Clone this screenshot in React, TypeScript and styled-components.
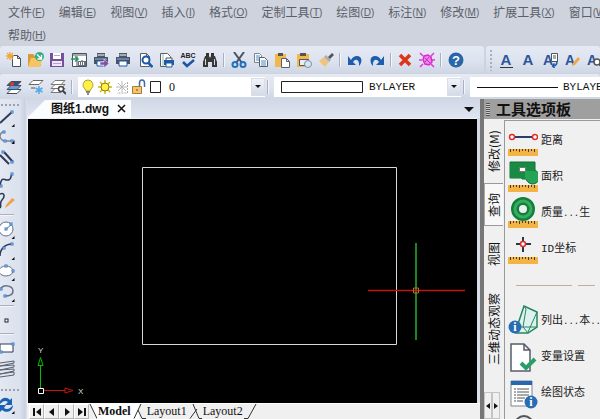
import React from "react";
import styled, { createGlobalStyle, css } from "styled-components";

const cjk = '"Noto Sans CJK SC", sans-serif';
const blue = "#1f5aa6";
const navy = "#2b3b57";
const gold = "#f2b84b";

const GlobalStyle = createGlobalStyle`
  * { box-sizing: border-box; }
  body { margin: 0; overflow: hidden; font-family: "Liberation Sans", ${cjk}; background: #cfd3dd; }
  button, select { font: inherit; color: inherit; }
  button { border: 0; padding: 0; margin: 0; background: none; }
  svg { display: block; flex: none; }
`;

const Window = styled.div`
  height: 100vh;
  display: flex;
  flex-direction: column;
  overflow: hidden;
  background: #cfd3dd;
`;

/* ---------- menu ---------- */
const MenuBar = styled.nav`
  display: flex;
  flex-wrap: wrap;
  column-gap: 14px;
  margin-right: -24px;
  padding: 0 0 0 8px;
  flex: none;
`;
const MenuItem = styled.button`
  height: 23px;
  display: flex;
  align-items: center;
  font: 12px/23px ${cjk};
  color: #5a5f6a;
  white-space: nowrap;
`;
const Hint = styled.span`
  font: 10px/23px "Liberation Sans", sans-serif;
  padding-top: 2px;
  u { text-underline-offset: 1px; }
`;

/* ---------- toolbars ---------- */
const ToolRow = styled.div`
  display: flex;
  gap: 2px;
  height: 27px;
  flex: none;
  min-width: 0;
`;
const barFace = css`
  background: linear-gradient(#e6eaf4, #dde3ef 55%, #cfd6e4);
  border-radius: 3px;
`;
const MainBar = styled.div`
  ${barFace}
  flex: 0 0 484px;
  display: flex;
  align-items: center;
  padding: 0 17px 0 3px;
`;
const TextBar = styled.div`
  ${barFace}
  flex: 1 1 0;
  min-width: 0;
  display: flex;
  align-items: center;
  overflow: hidden;
  padding-left: 3px;
`;
const LayerBar = styled.div`
  ${barFace}
  margin-top: 1px;
  height: 25px;
  flex: none;
  display: flex;
  align-items: center;
  overflow: hidden;
  padding-left: 3px;
`;
const ToolButton = styled.button<{ $fixed?: boolean }>`
  flex: ${(p) => (p.$fixed ? "0 0 22px" : "1 1 0")};
  min-width: 0;
  height: 22px;
  display: flex;
  align-items: center;
  justify-content: center;
`;
const Separator = styled.span<{ $wide?: boolean }>`
  flex: none;
  width: ${(p) => (p.$wide ? 9 : 7)}px;
  height: 14px;
  background: linear-gradient(90deg, transparent 2px, #aab0bd 2px 3px, #f4f6fa 3px 4px, transparent 4px);
`;
const Grip = styled.span`
  flex: none;
  width: 6px;
  height: 22px;
  background: radial-gradient(circle at 2px 2px, #a9afbb 1px, transparent 1px) 0 0 / 4px 4px repeat-y;
`;
const Combo = styled.label<{ $indent?: number }>`
  position: relative;
  flex: none;
  width: 187px;
  height: 20px;
  display: flex;
  align-items: center;
  gap: 1px;
  padding-left: ${(p) => p.$indent ?? 2}px;
  background: #fff;
`;
const ComboSelect = styled.select<{ $mono?: boolean }>`
  appearance: none;
  flex: 1;
  min-width: 0;
  height: 20px;
  border: 0;
  padding: 0 0 0 4px;
  background: transparent;
  color: #111;
  font: ${(p) => (p.$mono ? '11px "Liberation Mono", monospace' : '12px "Liberation Serif", serif')};
`;
const ComboArrow = styled.span`
  position: absolute;
  right: 0;
  top: 1px;
  width: 14px;
  height: 18px;
  display: flex;
  align-items: center;
  justify-content: center;
  background: linear-gradient(#f1f4f9, #d3dae7);
  border: 1px solid #d9dee8;
  pointer-events: none;
`;

/* ---------- work area ---------- */
const Body = styled.div`
  flex: 1;
  min-height: 0;
  display: flex;
  background: linear-gradient(#d3d8e4, #dce2ee);
`;
const DrawTools = styled.aside`
  flex: 0 0 27px;
  overflow: hidden;
  background: linear-gradient(90deg, #e3e8f2, #dbe1ed 20px, #c9d0df 25px, #dfe4ee);
`;
const DrawGrip = styled.div<{ $tall?: boolean }>`
  height: ${(p) => (p.$tall ? 14 : 8)}px;
  width: 21px;
  background: radial-gradient(circle at 2px 2px, #9aa1af 1px, transparent 1px) 0 100% / 4px 4px repeat-x;
  background-position-y: ${(p) => (p.$tall ? 8 : 4)}px;
`;
const DrawButton = styled.button`
  display: block;
  width: 16px;
  height: 21px;
`;
const DrawRule = styled.div`
  width: 14px;
  height: 7px;
  background: linear-gradient(transparent 2px, #aab0be 2px 3px, #f3f5f9 3px 4px, transparent 4px);
`;
const DocArea = styled.main`
  flex: 1;
  min-width: 0;
  display: flex;
  flex-direction: column;
`;
const DocTabs = styled.div`
  height: 19px;
  flex: none;
  display: flex;
  align-items: flex-end;
  background: linear-gradient(#d1d7e4, #dfe5f1);
`;
const DocTab = styled.div`
  height: 18px;
  display: flex;
  align-items: center;
  gap: 8px;
  padding: 0 4px 0 24px;
  background: #fbfcfe;
  clip-path: polygon(0 100%, 18px 0, 100% 0, 100% 100%);
  font: bold 12px/18px "Liberation Sans", ${cjk};
  color: #111;
`;
const CloseButton = styled.button`
  width: 10px;
  height: 16px;
  display: flex;
  align-items: center;
`;
const TabMenu = styled.button`
  margin: 0 5px 0 auto;
  width: 12px;
  height: 18px;
  display: flex;
  align-items: center;
  justify-content: center;
`;
const Canvas = styled.div`
  flex: 1;
  min-height: 0;
  margin-right: 3px;
  background: #000;
  border-left: 1px solid #eef0f4;
  border-top: 1px solid #eef0f4;
`;
const SheetBar = styled.div`
  flex: none;
  height: 16px;
  display: flex;
  padding-left: 2px;
  background: #f0f0f0;
  border-top: 1px solid #fff;
  overflow: hidden;
`;
const SheetNav = styled.button`
  width: 15px;
  height: 15px;
  display: flex;
  align-items: center;
  justify-content: center;
  border: 1px solid #b5b5b5;
  border-top-color: #fff;
  border-left-color: #fff;
`;
const SheetTab = styled.button<{ $active?: boolean }>`
  height: 15px;
  padding: 0 1px;
  font: ${(p) => (p.$active ? "bold" : "normal")} 12px/15px "Liberation Serif", serif;
  color: #111;
  background: ${(p) => (p.$active ? "#fff" : "#f0f0f0")};
`;

/* ---------- palette ---------- */
const Palette = styled.aside`
  flex: 0 0 120px;
  display: flex;
  flex-direction: column;
  overflow: hidden;
  border-left: 4px solid #777;
  background: #f0f0f0;
`;
const PaletteHead = styled.header`
  flex: none;
  height: 20px;
  display: flex;
  align-items: center;
  gap: 6px;
  padding-left: 2px;
  background: #9f9f9f;
  color: #111;
  font: bold 15px/20px ${cjk};
  white-space: nowrap;
`;
const HeadGrip = styled.span`
  width: 4px;
  height: 13px;
  background: repeating-linear-gradient(#555 0 1px, #c8c8c8 1px 2px);
`;
const PaletteBody = styled.div`
  flex: 1;
  min-height: 0;
  display: flex;
  padding-top: 1px;
`;
const SideTabs = styled.div`
  flex: 0 0 20px;
  display: flex;
  flex-direction: column;
`;
const SideTab = styled.button<{ $size: number; $active?: boolean }>`
  flex: 0 0 ${(p) => p.$size}px;
  width: 19px;
  writing-mode: vertical-rl;
  text-orientation: sideways;
  transform: rotate(180deg);
  text-align: center;
  white-space: nowrap;
  font: 12px/18px ${cjk};
  color: #111;
  ${(p) =>
    p.$active &&
    css`
      background: #f8f8f8;
      border-top: 1px solid #999;
      border-bottom: 1px solid #999;
      border-right: 1px solid #aaa;
    `}
`;
const SideScroll = styled.div`
  margin-top: 16px;
  display: flex;
  height: 34px;
`;
const SideScrollButton = styled.button`
  flex: 0 0 8px;
  border: 1px solid #c4c4c4;
  display: flex;
  align-items: center;
  justify-content: center;
`;
const ToolList = styled.div`
  flex: 1;
  min-width: 0;
  overflow: hidden;
  border-left: 1px solid #999;
  border-top: 1px solid #999;
  padding: 2px 0 0 3px;
`;
const PaletteItem = styled.button`
  height: 36px;
  display: flex;
  align-items: center;
  gap: 3px;
  color: #222;
  font: 11px/16px "Liberation Mono", ${cjk};
  white-space: nowrap;
`;
const Dots = styled.span`
  font-size: 9px;
`;
const ListRule = styled.div`
  height: 36px;
  background: linear-gradient(#c5ae93, #c5ae93) 8px 18px / 56px 1px no-repeat,
    linear-gradient(#c5ae93, #c5ae93) 70px 18px / 17px 1px no-repeat;
`;

/* ---------- icons ---------- */
const Icon = ({ children, w = 16, h = 16 }: { children: React.ReactNode; w?: number; h?: number }) => (
  <svg width={w} height={h} viewBox={`0 0 ${w} ${h}`} fill="none" aria-hidden="true">
    {children}
  </svg>
);

const Down = ({ w = 6 }: { w?: number }) => (
  <svg width={w} height={w / 2} viewBox="0 0 8 4" preserveAspectRatio="none" aria-hidden="true">
    <path d="M0 0h8L4 4z" fill="#111" />
  </svg>
);

const printer = (
  <>
    <path d="M4 1h8v4H4z" fill="#4c5668" />
    <path d="M4.500 3h7" stroke="#fff" />
    <path d="M1 5h14v7H1z" fill="#46536a" />
    <path d="M2 7h12" stroke="#9fb0cc" />
    <path d="M4 9h8v5H4z" fill="#fff" stroke="#1f5aa6" />
  </>
);
const page = <path d="M3.500 1.500h6l3 3v10h-9zM9.500 1.500v3h3" fill="#fff" stroke="#59606c" />;

const fileIcons: [string, React.ReactNode][] = [
  ["新建", <>
    <path d="M6.500 3.500h5l3 3v8h-8z M11.500 3.500v3h3" fill="#fff" stroke="#4b525e" />
    <path d="M4 0v8M0 4h8M1 1l6 6M7 1L1 7" stroke="#f0aa38" strokeWidth="1.300" />
  </>],
  ["打开", <>
    <path d="M0 2h5l2 2h6v10H0z" fill="#d99a35" />
    <path d="M3 6h12l-3 9H0z" fill="#f6c463" />
    <circle cx="11.500" cy="4.500" r="4.500" fill="#35ad86" />
    <path d="M9 2.500l4 4M13.500 3v4h-4" stroke="#fff" strokeWidth="1.300" />
  </>],
  ["保存", <>
    <path d="M1 1h14v14H1z" fill="#76509b" />
    <path d="M4 1h8v6H4z" fill="#fff" /><path d="M3 9h10v5H3z" fill="#efe8f6" />
    <path d="M5 3.500h6M4 11.500h8" stroke="#b6a3ca" />
  </>],
  ["输入", <>
    <path d="M1.500 1.500h14v13h-14z" fill="#fff" stroke="#4b525e" />
    <path d="M1 3h14M6 4v10M11 8v6" stroke="#4b525e" /><path d="M7 9h8v5H7z" fill="#66717e" />
    <path d="M8.500 10v3M10.500 10v3M12.500 10v3" stroke="#fff" />
    <path d="M0 7h6M4 4.500L7 7l-3 2.500" stroke="#25965e" strokeWidth="1.500" />
  </>],
  ["输出", <>{printer}<path d="M7 10h4V7l5 4.500-5 4.500v-3H7z" fill="#8252a6" stroke="#fff" strokeWidth=".5" /></>],
  ["打印", printer],
  ["打印预览", <>{page}<circle cx="9" cy="8" r="3.500" fill="#fff" stroke={blue} strokeWidth="2" /><path d="M11.500 11l4 4" stroke={blue} strokeWidth="2.500" /></>],
  ["页面设置", <>
    <path d="M2.500 1.500h7l3 3v10h-10z" fill="#fff" stroke="#59606c" /><path d="M5 2v12" stroke="#7dc5ab" />
    <path d="M8 6h6v3H8z" fill="#fff" stroke="#555" /><path d="M6 8h10v5H6z" fill={blue} /><path d="M8 11h6v4H8z" fill="#fff" stroke={blue} />
  </>],
  ["拼写检查", <>
    <text x="8" y="6" textAnchor="middle" fontSize="7" fontWeight="bold" fontFamily="Liberation Sans" fill="#222">ABC</text>
    <path d="M3 10l4 4 7-6" stroke="#1f55a5" strokeWidth="2.500" />
  </>],
  ["查找", <>
    <path d="M4 1h3v3H4zM9 1h3v3H9z" fill="#333" /><path d="M3 4h4l1 2 1-2h4l2 6v5h-5v-5H6v5H1v-5z" fill="#383838" />
    <path d="M3.500 7v6M12.500 7v6" stroke="#d6d9e0" />
  </>],
];
const editIcons: [string, React.ReactNode][] = [
  ["剪切", <>
    <path d="M3 0l8 11M13 0L5 11" stroke="#4b5260" strokeWidth="2" />
    <circle cx="4" cy="12.500" r="2.500" stroke="#2471bd" strokeWidth="2" /><circle cx="12" cy="12.500" r="2.500" stroke="#2471bd" strokeWidth="2" />
  </>],
  ["复制", <>
    <path d="M1.500 1.500h5l2 2v7h-7z" fill="#fff" stroke="#7b8491" /><path d="M3 4h4M3 6h4M3 8h3" stroke="#4f87bf" />
    <path d="M6.500 5.500h5l3 3v6h-8z" fill="#fff" stroke="#59606c" /><path d="M8 9h5M8 11h5M8 13h5" stroke="#4f87bf" />
  </>],
  ["粘贴", <>
    <path d="M1 2h11v13H1z" fill={gold} /><path d="M4 1h5v3H4z" fill="#555" />
    <path d="M7.500 6.500h5l3 3v6h-8zM12.500 6.500v3h3" fill="#fff" stroke="#59606c" />
  </>],
  ["选择性粘贴", <>
    <path d="M1 2h12v13H1z" fill={gold} /><path d="M4 1h6v3H4z" fill="#555" />
    <path d="M3.500 7.500h9v6h-9z" fill="#e7eef7" stroke="#555" /><circle cx="12" cy="12" r="3.500" fill="#d5e5f5" stroke="#7690ad" />
  </>],
  ["特性匹配", <>
    <path d="M1 9l5-4 5 5-4 5z" fill="#f0c47c" /><path d="M6 5l2-2 5 5-2 2z" fill="#a5b0bd" /><path d="M10 5l4-4 2 2-4 4z" fill="#555" />
  </>],
];
const undoPath = "M1 4v9h8l-3-3c2-3 5-3 6 1v3c4-4 3-10-2-10-3 0-4 1-6 4z";
const historyIcons: [string, React.ReactNode][] = [
  ["撤销", <path d={undoPath} fill="#1d5dab" />],
  ["重做", <path d={undoPath} fill="#1d5dab" transform="matrix(-1 0 0 1 16 0)" />],
];
const removeIcons: [string, React.ReactNode][] = [
  ["删除", <path d="M3 3l10 10M13 3L3 13" stroke="#dc3518" strokeWidth="3.500" />],
  ["清理", <>
    <path d="M1 1l3 3M15 1l-3 3M1 15l3-3M15 15l-3-3M0 8h3M13 8h3" stroke="#e337dc" strokeWidth="1.500" />
    <path d="M5 4l4-1 3 2 1 5-3 3-4-1-2-4z" fill="#ef83e9" stroke="#d92bd0" strokeWidth="1.500" /><path d="M6 6l5 5M10 5l-4 5" stroke="#b535bb" />
  </>],
];
const helpIcon = (
  <>
    <circle cx="8" cy="8" r="7.500" fill="#2866a8" />
    <text x="8" y="13" textAnchor="middle" fontSize="13" fontWeight="bold" fontFamily="Liberation Sans" fill="#fff">?</text>
  </>
);
const letterA = (x = 8) => (
  <text x={x} y="13" textAnchor="middle" fontSize="15" fontWeight="bold" fontFamily="Liberation Sans" fill="#2c569b">A</text>
);
const letterASmall = (
  <text x="6" y="13" textAnchor="middle" fontSize="14" fontWeight="bold" fontFamily="Liberation Sans" fill="#2c569b">A</text>
);
const textIcons: [string, React.ReactNode][] = [
  ["多行文字", <>{letterA()}<path d="M2 15.500h13" stroke="#333" /></>],
  ["单行文字", letterA()],
  ["字段", <>{letterASmall}<path d="M9.500 1.500h6v8h-6z" fill="#fff" stroke="#555" /><path d="M11 4h3M11 6h3" stroke="#555" /><path d="M15 9c0 4-2 5-4 5M12.500 11.500l-2 2.500 2 2" stroke={blue} strokeWidth="1.500" /></>],
  ["编辑文字", <>{letterASmall}<path d="M8 14l1-3 5-6 2 2-5 6z" fill="#efa846" /></>],
  ["查找文字", <>{letterASmall}<circle cx="11" cy="10" r="3" fill="#fff" stroke="#555" strokeWidth="1.500" /><path d="M13 12l3 3" stroke="#555" strokeWidth="2" /></>],
];
const sheet = (y: number, fill: string, stroke = "#454c58") => <path d={`M5 ${y}h10l-4 4H1z`} fill={fill} stroke={stroke} />;
const layerIcons: [string, React.ReactNode][] = [
  ["图层", <>{sheet(10.5, "#fff")}{sheet(6.5, "#5fa0dc")}{sheet(2.5, "#32527f")}<circle cx="6" cy="5" r="2" fill="#d93d2a" /></>],
  ["冻结图层", <>{sheet(1.5, "#fff", "#666")}<path d="M3 9h4" stroke="#555" /><path d="M11 7v8M7.500 9l7 4M14.500 9l-7 4" stroke="#54a8e8" strokeWidth="1.500" /></>],
  ["图层浏览", <>{sheet(9.5, "#fff", "#777")}{sheet(5.5, "#fff", "#777")}{sheet(1.5, "#fff", "#777")}<circle cx="11" cy="10" r="2.500" fill="#fff" stroke="#444" strokeWidth="1.500" /><path d="M13 12l3 3" stroke="#444" strokeWidth="2" /></>],
];

const node = (x: number, y: number) => <rect x={x - 1} y={y - 1} width="2" height="2" fill="#fff" stroke="#3978c4" />;
const corner = <path d="M14.500 17v3h-3z" fill="#111" />;
const ink = { stroke: navy, strokeWidth: 1.5 };
const drawGroups: [string, React.ReactNode][][] = [
  [
    ["直线", <><path d="M0 16L12 5" {...ink} strokeWidth="2" />{node(12, 5)}{corner}</>],
    ["多段线", <><path d="M0 9c0-4 2-5 4-5M0 9c1 3 2 4 5 4h6" {...ink} stroke="#7c8798" />{node(4, 4)}{node(5, 13)}{node(12, 13)}<path d="M14.500 12v4h-3z" fill="#111" /></>],
    ["双线", <><path d="M0 6l9 9M4 3l9 10" {...ink} strokeWidth="2" />{node(3, 3)}{node(12, 13)}</>],
    ["样条曲线", <><path d="M0 15c2-9 4-5 7-5 5 0 3-3 5-6" {...ink} />{node(12, 4)}{node(1, 16)}</>],
    ["徒手画", <><path d="M0 3c5-2 5 3 2 6s0 6-2 8" {...ink} /><path d="M5 17l1-3 6-7 3 2-7 6z" fill="#eda446" /></>],
  ],
  [
    ["圆", <><circle cx="6" cy="10" r="7" fill="#fff" stroke="#667184" /><path d="M6 10l5-4" stroke="#3978c4" />{node(6, 10)}{node(11, 5)}{corner}</>],
    ["圆弧", <><path d="M0 16C0 9 5 4 12 4" {...ink} />{node(4, 8)}{node(12, 4)}{corner}</>],
    ["椭圆", <><ellipse cx="6" cy="10" rx="7" ry="5" fill="#fff" stroke="#667184" />{node(6, 5)}{node(13, 10)}{corner}</>],
    ["椭圆弧", <><path d="M1 6c4-4 12-2 12 3 0 4-4 5-8 5" {...ink} stroke="#667184" />{node(1, 7)}{node(5, 14)}{corner}</>],
  ],
  [["点", <rect x="5" y="9" width="3" height="3" fill="#fff" stroke="#222" />]],
  [
    ["矩形", <><path d="M0 6h13v8H0z" fill="#fff" stroke={navy} />{node(13, 6)}{node(1, 14)}</>],
    ["螺旋", <path d="M0 4l14-2v2L0 7l14-1v2L0 11l14-1v2L0 15l14-2v3L0 18" stroke="#59606c" />],
  ],
];

const ruler = (
  <>
    <path d="M0 19h30v7H0z" fill="#f3b445" />
    <path d="M2.500 19v3M5.500 19v2M8.500 19v2M11.500 19v3M14.500 19v2M17.500 19v2M20.500 19v3M23.500 19v2M26.500 19v3" stroke="#4e3c17" />
  </>
);
const info = (x: number, y: number) => (
  <>
    <circle cx={x} cy={y} r="6.500" fill="#2a6cb3" />
    <text x={x} y={y + 4} textAnchor="middle" fontSize="12" fontWeight="bold" fontFamily="Liberation Serif" fill="#fff">i</text>
  </>
);
const d = <Dots>...</Dots>;
const measure: [React.ReactNode, React.ReactNode][] = [
  [<>距离</>, <><path d="M4 7h22" stroke="#2b3b6a" strokeWidth="2" /><circle cx="4" cy="7" r="2.500" fill="#fff" stroke="#e02f2b" strokeWidth="1.500" /><circle cx="27" cy="7" r="2.500" fill="#fff" stroke="#e02f2b" strokeWidth="1.500" />{ruler}</>],
  [<>面积</>, <><path d="M2-4h25v9H14v7H2z" fill="#178a43" stroke="#0d7233" /><path d="M14 4h10a7 7 0 1 1-6 9h-4z" fill="#27a357" stroke="#0d7233" /><path d="M2-3h24v8H17v7H2z" fill="#178a43" /><path d="M11.500 1.500h6v4h-6z" fill="#fff" stroke="#777" />{ruler}</>],
  [<>质量{d}生</>, <><circle cx="15" cy="7" r="8" stroke="#13803a" strokeWidth="8" /><circle cx="15" cy="7" r="8" stroke="#36ad62" strokeWidth="3" />{ruler}</>],
  [<>ID坐标</>, <><path d="M15-1v15M8 6h15" stroke="#26384f" strokeWidth="2" /><circle cx="15" cy="6" r="2.500" fill="#fff" stroke="#e02f2b" strokeWidth="1.500" />{ruler}</>],
];
const inquire: [React.ReactNode, React.ReactNode][] = [
  [<>列出{d}本{d}</>, <><path d="M8 20l8-24 13 6v15l-9 6H8z" fill="#dff1ef" stroke="#25865f" strokeWidth="1.500" /><path d="M16-4l2 3-3 18 5 6M15 17H8M20 22l9-20M15 17l14 0" stroke="#25865f" />{info(7, 17)}</>],
  [<>变量设置</>, <><path d="M3-2h13l6 6v21H3zM16-2v6h6" fill="#fff" stroke="#555d68" strokeWidth="1.500" /><path d="M13 17l5 5 9-9" stroke="#2a9d69" strokeWidth="4" /></>],
  [<>绘图状态</>, <><path d="M3-1h21v25H3z" fill="#fff" stroke="#7b8491" /><path d="M3-1h21v4H3z" fill="#2866b0" /><path d="M6 7h2M6 10h2M6 13h2M6 16h2M6 19h2M9 7h12M9 10h12M9 13h12M9 16h8M9 19h6" stroke="#555" />{info(23, 20)}</>],
  ["", <circle cx="16" cy="7" r="9" fill="#e1e4e8" stroke="#555" strokeWidth="2" />],
];

const menus: [string, string][] = [
  ["文件", "F"], ["编辑", "E"], ["视图", "V"], ["插入", "I"], ["格式", "O"], ["定制工具", "T"],
  ["绘图", "D"], ["标注", "N"], ["修改", "M"], ["扩展工具", "X"], ["窗口", "W"], ["帮助", "H"],
];
const navPaths = ["M1 1v8h2V1zM9 1v8L4 5z", "M7 1v8L2 5z", "M3 1v8l5-4z", "M1 1v8l5-4zM7 1v8h2V1z"];

const Tools = ({ items, fixed }: { items: [string, React.ReactNode][]; fixed?: boolean }) => (
  <>
    {items.map(([name, art]) => (
      <ToolButton key={name} aria-label={name} $fixed={fixed}><Icon>{art}</Icon></ToolButton>
    ))}
  </>
);

const PaletteTools = ({ items }: { items: [React.ReactNode, React.ReactNode][] }) => (
  <>
    {items.map(([label, art], i) => (
      <PaletteItem key={i}>
        <svg width="30" height="32" viewBox="0 -5 30 32" fill="none" aria-hidden="true">{art}</svg>
        <span>{label}</span>
      </PaletteItem>
    ))}
  </>
);

const Slant = ({ path, left, right }: { path: string; left: string; right: string }) => (
  <svg width="14" height="15" viewBox="0 0 14 15" fill="none" aria-hidden="true">
    <path d="M0 0h7v15H0z" fill={left} /><path d="M7 0h7v15H7z" fill={right} />
    <path d={path} stroke="#333" />
  </svg>
);

export default function App() {
  return (
    <Window>
      <GlobalStyle />
      <MenuBar>
        {menus.map(([name, key]) => (
          <MenuItem key={name}>{name}<Hint>(<u>{key}</u>)</Hint></MenuItem>
        ))}
      </MenuBar>
      <ToolRow>
        <MainBar>
          <Tools items={fileIcons} />
          <Separator />
          <Tools items={editIcons} />
          <Separator />
          <Tools items={historyIcons} />
          <Separator />
          <Tools items={removeIcons} />
          <Separator />
          <Tools items={[["帮助", helpIcon]]} />
        </MainBar>
        <TextBar><Grip /><Tools items={textIcons} fixed /></TextBar>
      </ToolRow>
      <LayerBar>
        <Tools items={layerIcons} fixed />
        <Separator $wide />
        <Combo>
          <Icon>
            <path d="M8 1a5 5 0 0 0-3 9l1 2h4l1-2A5 5 0 0 0 8 1z" fill="#fff04a" stroke="#b3a12d" /><path d="M6 13h4M7 15h2" stroke="#666" strokeWidth="1.500" />
          </Icon>
          <Icon>
            <path d="M8 1v14M1 8h14M3 3l10 10M13 3L3 13" stroke="#d5b700" strokeWidth="1.500" /><circle cx="8" cy="8" r="4" fill="#fff34a" stroke="#8b7b10" />
          </Icon>
          <Icon>
            <path d="M8 2v11M2 8h11M4 4l8 8M12 4l-8 8" stroke="#b8b8b8" /><path d="M13.500 3v11H3" stroke="#aaa" strokeDasharray="2 1" />
          </Icon>
          <Icon>
            <path d="M1.500 7.500h9v7h-9z" fill="#f3c56f" stroke="#a67c38" /><path d="M8.500 7V4c0-4 5-4 5 0v4" stroke="#3f6aa8" strokeWidth="1.500" /><path d="M6 10v2" stroke="#6b4c1a" />
          </Icon>
          <Icon><path d="M2.500 2.500h10v11h-10z" fill="#fff" stroke="#222" /></Icon>
          <ComboSelect aria-label="图层"><option>0</option></ComboSelect>
          <ComboArrow><Down /></ComboArrow>
        </Combo>
        <Separator $wide />
        <Combo>
          <svg width="88" height="12" viewBox="0 0 88 12" aria-hidden="true"><path d="M5.500.5h81v11h-81z" fill="#fff" stroke="#222" /></svg>
          <ComboSelect $mono aria-label="颜色"><option>BYLAYER</option></ComboSelect>
          <ComboArrow><Down /></ComboArrow>
        </Combo>
        <Separator $wide />
        <Combo $indent={0}>
          <svg width="88" height="12" viewBox="0 0 88 12" aria-hidden="true"><path d="M7 6.500h81" stroke="#111" /></svg>
          <ComboSelect $mono aria-label="线型"><option>BYLAYER</option></ComboSelect>
          <ComboArrow><Down /></ComboArrow>
        </Combo>
      </LayerBar>
      <Body>
        <DrawTools>
          <DrawGrip />
          {drawGroups.map((group, i) => (
            <React.Fragment key={i}>
              {i > 0 && <DrawRule />}
              {group.map(([name, art]) => (
                <DrawButton key={name} aria-label={name}><Icon w={16} h={21}>{art}</Icon></DrawButton>
              ))}
            </React.Fragment>
          ))}
          <DrawGrip $tall />
          <DrawButton aria-label="重生成">
            <Icon w={16} h={21}>
              <path d="M0 7c3-4 7-4 10-1l2-2v7H5l3-3C5 6 3 7 0 10zM0 11h6l-2 3c3 2 6 1 9-3 0 6-6 9-11 5l-2 2z" fill="#1c62b4" />
              {corner}
            </Icon>
          </DrawButton>
        </DrawTools>
        <DocArea>
          <DocTabs>
            <DocTab>
              图纸1.dwg
              <CloseButton aria-label="关闭"><Icon w={10} h={10}><path d="M1 1l7 7M8 1L1 8" stroke="#111" strokeWidth="1.500" /></Icon></CloseButton>
            </DocTab>
            <TabMenu aria-label="图纸列表"><Down w={10} /></TabMenu>
          </DocTabs>
          <Canvas>
            <svg width="100%" height="100%" viewBox="0 0 449 284" fill="none" role="img" aria-label="绘图区">
              <path d="M114.500 48.500h254v177h-254z" stroke="#d8d8d8" />
              <path d="M388 124v97" stroke="#1b861b" strokeWidth="2" />
              <path d="M340 171.500h97" stroke="#c01414" strokeWidth="1.500" />
              <path d="M385.500 169h5v5h-5z" stroke="#c8641e" />
              <path d="M12.500 269v-23M10 246.500h5l-2.500-8z" stroke="#00c000" />
              <path d="M16 271.500h21M37 269v5l8-2.500z" stroke="#c81414" />
              <path d="M10.500 269.500h5v5h-5z" stroke="#fff" />
              <text x="10" y="234" fontSize="8" fontFamily="Liberation Sans" fill="#ddd">Y</text>
              <text x="50" y="275" fontSize="8" fontFamily="Liberation Sans" fill="#ddd">X</text>
            </svg>
          </Canvas>
          <SheetBar>
            {navPaths.map((p) => (
              <SheetNav key={p} aria-label="切换布局"><Icon w={10} h={10}><path d={p} fill="#111" /></Icon></SheetNav>
            ))}
            <svg width="8" height="15" viewBox="0 0 8 15" fill="none" aria-hidden="true"><path d="M1 0h7v15z" fill="#fff" /><path d="M1 0l7 14.500" stroke="#333" /></svg>
            <SheetTab $active>Model</SheetTab>
            <Slant path="M2 14.500L9 0M6 6l4 8.500h4" left="#fff" right="#f0f0f0" />
            <SheetTab>Layout1</SheetTab>
            <Slant path="M2 14.500L9 5M5 0l6 14.500h3" left="#f0f0f0" right="#f0f0f0" />
            <SheetTab>Layout2</SheetTab>
            <Slant path="M0 14.500h4L12 0" left="#f0f0f0" right="#f0f0f0" />
          </SheetBar>
        </DocArea>
        <Palette>
          <PaletteHead><HeadGrip />工具选项板</PaletteHead>
          <PaletteBody>
            <SideTabs>
              <SideTab $size={63}>修改(M)</SideTab>
              <SideTab $size={43} $active>查询</SideTab>
              <SideTab $size={56}>视图</SideTab>
              <SideTab $size={94}>三维动态观察</SideTab>
              <SideScroll>
                <SideScrollButton aria-label="上一组"><Icon w={4} h={6}><path d="M4 0v6L0 3z" fill="#111" /></Icon></SideScrollButton>
                <SideScrollButton aria-label="下一组"><Icon w={4} h={6}><path d="M0 0v6l4-3z" fill="#111" /></Icon></SideScrollButton>
              </SideScroll>
            </SideTabs>
            <ToolList>
              <PaletteTools items={measure} />
              <ListRule />
              <PaletteTools items={inquire} />
            </ToolList>
          </PaletteBody>
        </Palette>
      </Body>
    </Window>
  );
}
